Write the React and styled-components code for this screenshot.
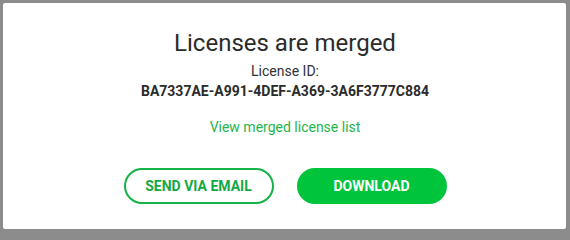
import styled, { createGlobalStyle } from 'styled-components';

const GlobalStyle = createGlobalStyle`
  html, body {
    margin: 0;
    padding: 0;
    background: #8c8c8c;
  }
  body {
    font-family: Roboto, "Liberation Sans", sans-serif;
  }
`;

const Frame = styled.div`
  width: 570px;
  height: 232px;
  box-sizing: border-box;
  padding: 3px 4px 3px 3px;
  background: #8c8c8c;
`;

const Card = styled.div`
  height: 100%;
  box-sizing: border-box;
  background: #fff;
  border-radius: 2px;
  padding: 25px 24px 0 25px;
  display: flex;
  flex-direction: column;
  align-items: center;
`;

const Title = styled.h1`
  margin: 0;
  font-size: 24px;
  font-weight: 400;
  line-height: 30px;
  color: #2b2b2b;
`;

const Label = styled.div`
  margin-top: 4px;
  font-size: 14px;
  line-height: 18px;
  color: #333;
`;

const LicenseId = styled.div`
  margin-top: 2px;
  font-size: 14px;
  font-weight: 700;
  line-height: 18px;
  color: #2b2b2b;
`;

const Link = styled.a`
  margin-top: 18px;
  font-size: 14px;
  line-height: 18px;
  color: #1fb54a;
  text-decoration: none;
  cursor: pointer;
`;

const Actions = styled.div`
  margin-top: 32px;
  display: flex;
  gap: 23px;
`;

const Button = styled.button`
  width: 150px;
  height: 36px;
  box-sizing: border-box;
  border-radius: 18px;
  border: 2px solid ${p => (p.$primary ? '#00c43c' : '#14b247')};
  background: ${p => (p.$primary ? '#00c43c' : '#fff')};
  color: ${p => (p.$primary ? '#fff' : '#14a844')};
  font-family: Roboto, "Liberation Sans", sans-serif;
  font-size: 14px;
  font-weight: 700;
  text-transform: uppercase;
  padding: 0;
  cursor: pointer;
`;

export default function App() {
  return (
    <>
      <GlobalStyle />
      <Frame>
        <Card>
          <Title>Licenses are merged</Title>
          <Label>License ID:</Label>
          <LicenseId>BA7337AE-A991-4DEF-A369-3A6F3777C884</LicenseId>
          <Link>View merged license list</Link>
          <Actions>
            <Button>Send via email</Button>
            <Button $primary>Download</Button>
          </Actions>
        </Card>
      </Frame>
    </>
  );
}
